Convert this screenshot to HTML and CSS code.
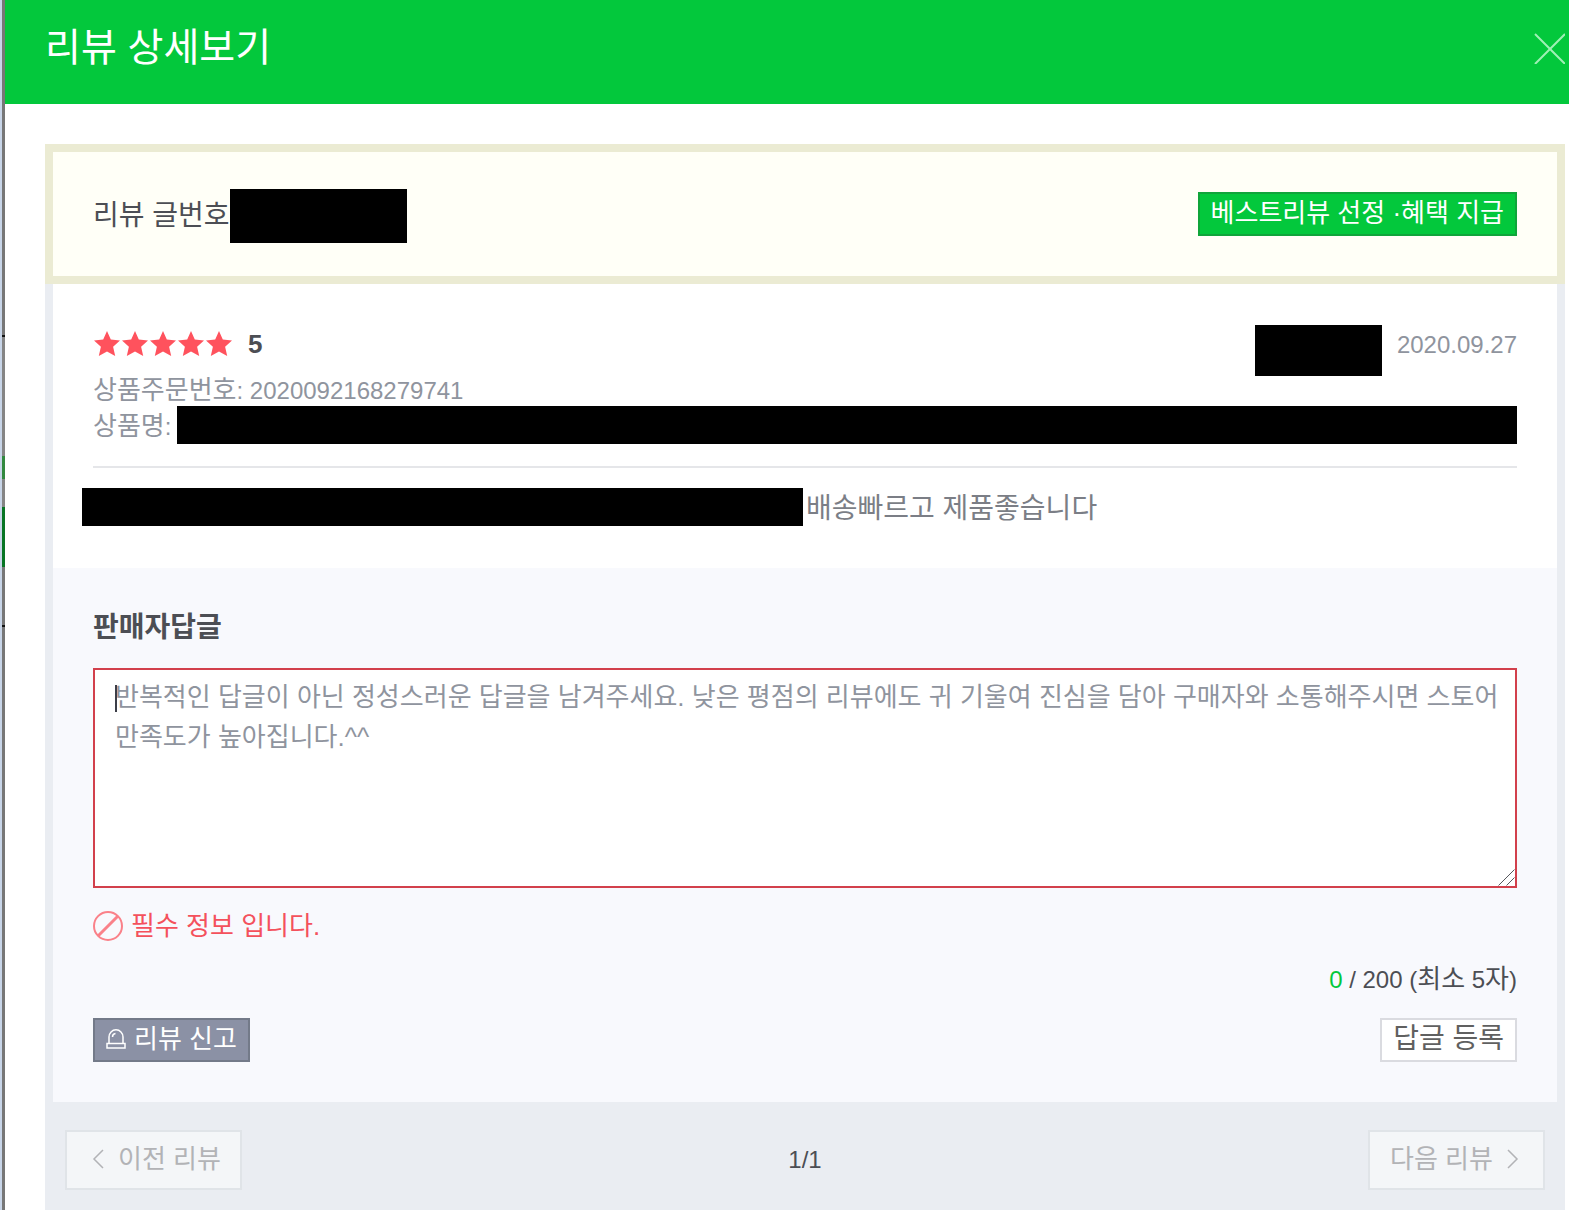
FILE: index.html
```html
<!DOCTYPE html>
<html lang="ko">
<head>
<meta charset="utf-8">
<meta name="viewport" content="width=device-width, initial-scale=1">
<title>리뷰 상세보기</title>
<link rel="stylesheet" href="styles.css">
</head>
<body>
<div class="page">
  <div class="backdrop"></div>
  <main class="modal">
    <header class="modal-head">
      <h1 class="modal-title">리뷰 상세보기</h1>
      <button class="close" type="button" aria-label="닫기">
        <svg width="32" height="32" viewBox="0 0 32 32" fill="none" stroke="currentColor" stroke-width="2"><path d="M2 2 32 32M32 2 2 32"/></svg>
      </button>
    </header>
    <div class="modal-body">
      <section class="summary">
        <div class="review-no">리뷰 글번호<span class="mask mask-no"></span></div>
        <button class="btn btn-green" type="button">베스트리뷰 선정 ·혜택 지급</button>
      </section>
      <section class="review">
        <div class="review-top">
          <div>
            <div class="rating">
              <svg class="stars" width="139" height="26" viewBox="0 0 139 26" fill="currentColor" aria-hidden="true">
                <defs><path id="star" d="M14 0 17.8 8.6 27 9.6 20.1 15.8 22.2 25 14 20.4 5.8 25 7.9 15.8 1 9.6 10.2 8.6Z"/></defs>
                <use href="#star"/><use href="#star" x="28"/><use href="#star" x="56"/><use href="#star" x="84"/><use href="#star" x="112"/>
              </svg>
              <strong class="score">5</strong>
            </div>
            <div class="info">상품주문번호<span class="num">: 2020092168279741</span></div>
          </div>
          <div class="author"><span class="mask mask-author"></span><time class="num" datetime="2020-09-27">2020.09.27</time></div>
        </div>
        <div class="info product"><span>상품명<span class="num">:</span></span><span class="mask mask-product"></span></div>
        <div class="content"><span class="mask mask-content"></span><p class="content-text">배송빠르고 제품좋습니다</p></div>
      </section>
      <form class="reply">
        <label class="reply-label" for="reply">판매자답글</label>
        <div class="field">
          <textarea class="reply-input" id="reply" placeholder="반복적인 답글이 아닌 정성스러운 답글을 남겨주세요. 낮은 평점의 리뷰에도 귀 기울여 진심을 담아 구매자와 소통해주시면 스토어 만족도가 높아집니다.^^"></textarea>
          <span class="caret"></span>
          <svg class="grip" width="17" height="17" viewBox="0 0 17 17" fill="none" stroke="currentColor" aria-hidden="true"><path d="M.5 16.500l16-16M8.500 16.500l8-8"/></svg>
        </div>
        <div class="error">
          <svg width="30" height="30" viewBox="0 0 30 30" fill="none" stroke="currentColor" stroke-width="2" aria-hidden="true"><circle cx="15" cy="15" r="14"/><path d="M5 25 25 5" stroke-width="3"/></svg>
          <span>필수 정보 입니다.</span>
        </div>
        <div class="counter"><span class="count">0</span> / 200 (<span class="ko">최소</span> 5<span class="ko">자</span>)</div>
        <div class="actions">
          <button class="btn btn-slate" type="button">
            <svg width="20" height="20" viewBox="0 0 20 20" fill="none" stroke="currentColor" stroke-width="1.500" aria-hidden="true"><path d="M3 14.500V8a7 7.200 0 0 1 14 0v6.500M1 14.500h18v4.500H1ZM6.500 8a3.500 3.500 0 0 1 3-3.500"/></svg>
            리뷰 신고
          </button>
          <button class="btn btn-white" type="button">답글 등록</button>
        </div>
      </form>
      <nav class="pager">
        <button class="btn-page btn-prev" type="button" disabled><svg width="12" height="20" viewBox="0 0 12 20" fill="none" stroke="currentColor" stroke-width="1.500" aria-hidden="true"><path d="M11 1 2 10l9 9"/></svg>이전 리뷰</button>
        <span class="page-no">1/1</span>
        <button class="btn-page btn-next" type="button" disabled>다음 리뷰<svg width="12" height="20" viewBox="0 0 12 20" fill="none" stroke="currentColor" stroke-width="1.500" aria-hidden="true"><path d="M1 1l9 9-9 9"/></svg></button>
      </nav>
    </div>
  </main>
</div>
</body>
</html>
```
FILE: styles.css
```css
* { box-sizing: border-box; }

body {
  margin: 0;
  background: #fff;
  color: #4c4e54;
  font-family: "Liberation Sans", "Noto Sans CJK KR", sans-serif;
  font-size: 26px;
  line-height: 36px;
}

button, textarea { font: inherit; }
svg { display: block; flex: none; }

.page { display: flex; min-height: 100vh; }

/* Sliver of the dimmed page behind the modal */
.backdrop {
  flex: none;
  width: 5px;
  border-left: 2px solid #c8d5e8;
  background: linear-gradient(#777 335px, #111 335px 337px, #858585 337px 456px, #32883f 456px 479px, #858585 479px 507px, #087524 507px 567px, #777 567px 625px, #111 625px 627px, #777 627px);
}

.modal { flex: 1; min-width: 0; }

.modal-head {
  display: flex;
  justify-content: space-between;
  align-items: center;
  height: 104px;
  padding: 0 4px 8px 40px;
  background: #03c83c;
  color: #fff;
}
.modal-title { margin: 0; font-size: 39px; font-weight: 400; line-height: 48px; }
.close { padding: 0; border: 0; background: none; color: #9ff0b5; cursor: pointer; }

.modal-body { margin: 40px 4px 0 40px; background: #eaedf2; }

.mask { display: block; background: #000; }

.summary {
  display: flex;
  justify-content: space-between;
  align-items: center;
  height: 140px;
  padding: 0 40px;
  border: 8px solid #ebebd3;
  background: #fffff7;
}
.review-no { display: flex; align-items: center; padding-top: 4px; font-size: 28px; }
.mask-no { width: 177px; height: 54px; }

.btn {
  display: flex;
  align-items: center;
  gap: 8px;
  height: 44px;
  padding: 0 11px 2px;
  border: 2px solid;
  line-height: 36px;
  white-space: nowrap;
  cursor: pointer;
}
.btn-green { border-color: #10a53a; background: #03c83c; color: #fff; }
.btn-slate { border-color: #737a89; background: #8b91a5; color: #fff; }
.btn-white { border-color: #dadbe0; background: #fff; color: #606060; font-size: 28px; }

.review { margin: 0 8px; padding: 41px 40px 40px; background: #fff; }
.review-top { display: flex; justify-content: space-between; height: 81px; }
.rating { display: flex; align-items: center; gap: 16px; height: 38px; margin-bottom: 9px; }
.stars { color: #ff525d; }
.info { color: #8f949e; }
.num { font-size: 24px; }
.author { display: flex; gap: 15px; color: #8f949e; }
.author time { line-height: 40px; }
.mask-author { width: 127px; height: 51px; }
.product { display: flex; gap: 6px; padding-bottom: 22px; border-bottom: 2px solid #e5e6e9; line-height: 40px; }
.product > span:first-child { height: 38px; }
.mask-product { flex: 1; height: 38px; }
.content { display: flex; gap: 3px; height: 40px; margin: 20px 0 0 -11px; }
.mask-content { flex: 0 1 721px; height: 38px; }
.content-text { margin: 0; color: #7b7e86; font-size: 28px; line-height: 42px; }

.reply { margin: 0 8px; padding: 42px 40px 40px; background: #f8f9fd; }
.reply-label { display: block; margin-bottom: 22px; font-size: 28px; font-weight: 700; }
.field { position: relative; }
.reply-input {
  display: block;
  width: 100%;
  height: 220px;
  padding: 7px 10px 7px 20px;
  border: 2px solid #d2404c;
  background: #fff;
  color: #4c4e54;
  line-height: 40px;
  word-break: keep-all;
  outline: 0;
  resize: vertical;
}
.reply-input::placeholder { color: #8f949e; opacity: 1; }
.reply-input::-webkit-resizer { background: transparent; }
.grip { position: absolute; right: 2px; bottom: 2px; color: #55575c; pointer-events: none; }
.caret { position: absolute; top: 17px; left: 22px; width: 2px; height: 27px; background: #3c3e48; }
.error { display: flex; align-items: center; gap: 8px; margin-top: 20px; color: #f4515c; }
.error svg { color: #fa8189; }
.counter { margin: 17px 0 20px; font-size: 24px; text-align: right; }
.ko { font-size: 26px; }
.count { color: #03c83c; }
.actions { display: flex; justify-content: space-between; }

.pager {
  display: grid;
  grid-template-columns: 1fr auto 1fr;
  align-items: center;
  padding: 28px 20px 20px;
}
.btn-page {
  display: flex;
  align-items: center;
  justify-content: center;
  gap: 14px;
  width: 177px;
  height: 60px;
  padding: 0 0 2px;
  border: 2px solid #e0e4e8;
  background: #f4f6f8;
  color: #b2b3b6;
}
.btn-prev { padding-left: 6px; }
.btn-next { justify-self: end; padding-right: 4px; }
.page-no { font-size: 24px; }
```
